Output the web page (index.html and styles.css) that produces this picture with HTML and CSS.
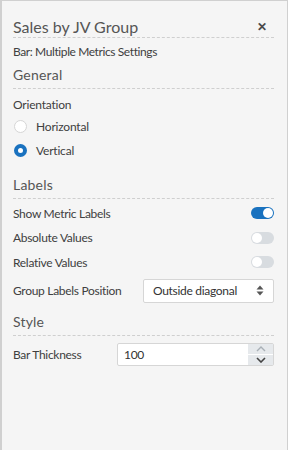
FILE: index.html
```html
<!DOCTYPE html>
<html>
<head>
<title>Sales by JV Group</title>
<meta name="viewport" content="width=device-width, initial-scale=1">
<link rel="stylesheet" href="styles.css">
</head>
<body>
<div class="panel">
  <div class="panel-head">
    <span class="panel-title">Sales by JV Group</span>
    <span class="close">&#x2715;</span>
  </div>
  <div class="subtitle">Bar: Multiple Metrics Settings</div>

  <div class="section">General</div>
  <div class="field-label">Orientation</div>
  <label class="radio-row"><span class="radio"></span>Horizontal</label>
  <label class="radio-row"><span class="radio checked"></span>Vertical</label>

  <div class="section">Labels</div>
  <div class="row"><span>Show Metric Labels</span><span class="toggle on"></span></div>
  <div class="row"><span>Absolute Values</span><span class="toggle"></span></div>
  <div class="row"><span>Relative Values</span><span class="toggle"></span></div>
  <div class="row select-row">
    <span>Group Labels Position</span>
    <div class="select">
      <span>Outside diagonal</span>
      <svg width="8" height="11" viewBox="0 0 8 11"><path d="M4 0.5 L7.5 4.5 H0.5 Z M4 10.5 L7.5 6.5 H0.5 Z" fill="#555"/></svg>
    </div>
  </div>

  <div class="section">Style</div>
  <div class="row num-row">
    <span>Bar Thickness</span>
    <div class="number">
      <span class="num-value">100</span>
      <div class="spin">
        <span class="spin-btn"><svg width="10" height="6" viewBox="0 0 10 6"><path d="M1 5 L5 1 L9 5" fill="none" stroke="#a9b0b6" stroke-width="1.4"/></svg></span>
        <span class="spin-btn"><svg width="10" height="6" viewBox="0 0 10 6"><path d="M1 1 L5 5 L9 1" fill="none" stroke="#444" stroke-width="1.6"/></svg></span>
      </div>
    </div>
  </div>
</div>
</body>
</html>
```
FILE: styles.css
```css
html, body {
  margin: 0;
  background: #f5f5f5;
}
body {
  font-family: "Lato", "Open Sans", sans-serif;
  color: #404040;
}
.panel {
  box-sizing: border-box;
  width: 288px;
  height: 450px;
  border: 1px solid #d0d0d0;
  border-left-width: 2px;
  border-bottom: none;
  padding: 0 13px 0 11px;
  background: #f5f5f5;
}
.panel-head {
  display: flex;
  justify-content: space-between;
  align-items: center;
  height: 37px;
  box-sizing: border-box;
  padding-top: 14px;
  border-bottom: 1px dashed #cfcfcf;
}
.panel-title {
  font-size: 16px;
  color: #555;
}
.close {
  font-size: 12px;
  font-weight: bold;
  color: #4a4a4a;
  margin-right: 7px;
}
.subtitle {
  font-size: 12px;
  letter-spacing: -0.4px;
  line-height: 24px;
  padding-top: 2px;
}
.section {
  font-size: 14px;
  letter-spacing: 0.2px;
  color: #555;
  height: 24px;
  line-height: 22px;
  border-bottom: 1px dashed #cfcfcf;
}
.field-label {
  font-size: 12px;
  letter-spacing: -0.2px;
  line-height: 18px;
  margin-top: 7px;
}
.radio-row {
  display: flex;
  align-items: center;
  height: 24px;
  font-size: 12px;
  letter-spacing: -0.2px;
}
.radio {
  box-sizing: border-box;
  width: 13px;
  height: 13px;
  border-radius: 50%;
  border: 1px solid #d6d6d6;
  background: #fff;
  margin-right: 9px;
  margin-left: 1px;
}
.radio.checked {
  border: 4px solid #1a72bf;
}
.row {
  display: flex;
  justify-content: space-between;
  align-items: center;
  height: 24.5px;
  font-size: 12px;
  letter-spacing: -0.3px;
}
.radio-row + .section {
  margin-top: 12px;
}
.section + .row {
  margin-top: 2px;
}
.toggle {
  position: relative;
  width: 23px;
  height: 12px;
  border-radius: 6px;
  background: #d8dce0;
}
.toggle::after {
  content: "";
  position: absolute;
  top: 1px;
  left: 1px;
  width: 10px;
  height: 10px;
  border-radius: 50%;
  background: #fff;
}
.toggle.on {
  background: #1a72bf;
}
.toggle.on::after {
  left: 12px;
}
.select-row {
  height: 24px;
  margin-top: 4px;
}
.select {
  box-sizing: border-box;
  width: 131px;
  height: 24px;
  display: flex;
  align-items: center;
  justify-content: space-between;
  padding: 0 9px 0 9px;
  background: #fff;
  border: 1px solid #d6d6d6;
  border-radius: 2px;
  font-size: 12px;
  color: #333;
}
.select-row + .section {
  margin-top: 8px;
}
.section + .num-row {
  height: 23px;
  margin-top: 7px;
}
.number {
  box-sizing: border-box;
  width: 157px;
  height: 23px;
  display: flex;
  background: #fff;
  border: 1px solid #d6d6d6;
  border-radius: 2px;
}
.num-value {
  flex: 1;
  font-size: 12px;
  line-height: 21px;
  padding-left: 6px;
  color: #333;
}
.spin {
  width: 25px;
  display: flex;
  flex-direction: column;
  background: #e6e9ec;
}
.spin-btn {
  flex: 1;
  display: flex;
  align-items: center;
  justify-content: center;
}
.spin-btn + .spin-btn {
  border-top: 1px solid #fff;
}
```
